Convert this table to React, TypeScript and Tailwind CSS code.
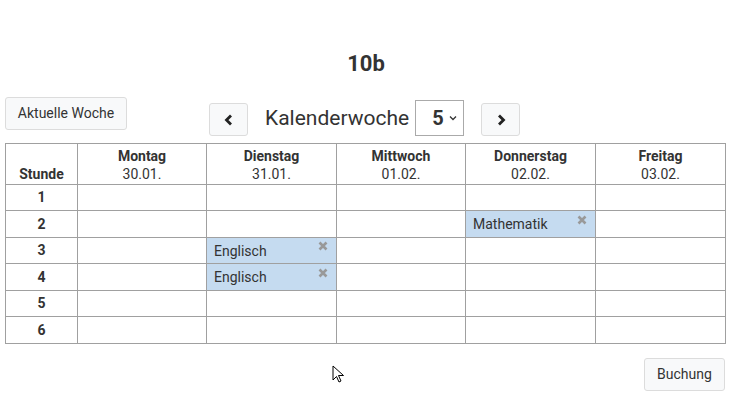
import React from "react";

const days = [
  { name: "Montag", date: "30.01." },
  { name: "Dienstag", date: "31.01." },
  { name: "Mittwoch", date: "01.02." },
  { name: "Donnerstag", date: "02.02." },
  { name: "Freitag", date: "03.02." },
];

// lessons keyed by "hour-dayIndex"
const lessons: Record<string, string> = {
  "2-3": "Mathematik",
  "3-1": "Englisch",
  "4-1": "Englisch",
};

const Chevron = ({ dir }: { dir: "left" | "right" }) => (
  <svg width="10" height="12" viewBox="0 0 10 12">
    <path
      d={dir === "left" ? "M7 1.5 L2.5 6 L7 10.5" : "M3 1.5 L7.5 6 L3 10.5"}
      fill="none"
      stroke="#222"
      strokeWidth="2.8"
    />
  </svg>
);

const Cross = () => (
  <svg width="10" height="10" viewBox="0 0 10 10">
    <path d="M1.5 1.5 L8.5 8.5 M8.5 1.5 L1.5 8.5" stroke="#999" strokeWidth="2.6" />
  </svg>
);

export default function App() {
  return (
    <div className="relative w-[731px] h-[401px] bg-white text-[#333] font-['Roboto',sans-serif]">
      <div className="px-[5px] pt-[49px]">
        <h1 className="text-center text-[22px] font-bold leading-[30px] ml-[1px]">10b</h1>

        <div className="flex items-start mt-[18px] h-[46px]">
          <button className="h-[33px] w-[122px] rounded-[3px] border border-[#dcdcdc] bg-[#f8f9fa] text-[14px] text-[#333]">
            Aktuelle Woche
          </button>
          <div className="flex items-center ml-[82px] mt-[3px]">
            <button className="flex h-[33px] w-[39px] items-center justify-center rounded-[3px] border border-[#dcdcdc] bg-[#f8f9fa] mt-[3px]">
              <Chevron dir="left" />
            </button>
            <span className="ml-[17px] text-[21px] leading-[30px] text-[#333]">Kalenderwoche</span>
            <div className="ml-[6px] flex h-[36px] w-[49px] items-center border border-[#aaa] bg-white pl-[16px]">
              <span className="text-[20px] font-bold">5</span>
              <svg className="ml-[5px]" width="8" height="6" viewBox="0 0 8 6">
                <path d="M1 1.5 L4 4.5 L7 1.5" fill="none" stroke="#333" strokeWidth="1.3" />
              </svg>
            </div>
            <button className="ml-[17px] flex h-[33px] w-[39px] items-center justify-center rounded-[3px] border border-[#dcdcdc] bg-[#f8f9fa] mt-[3px]">
              <Chevron dir="right" />
            </button>
          </div>
        </div>

        <table className="w-[721px] border-collapse table-fixed text-[14px]">
          <colgroup>
            <col className="w-[72px]" />
            <col className="w-[129px]" />
            <col className="w-[130px]" />
            <col className="w-[129px]" />
            <col className="w-[130px]" />
            <col className="w-[130px]" />
          </colgroup>
          <thead>
            <tr className="h-[41px]">
              <th className="border border-[#a0a0a0] align-bottom pb-[1px] font-bold leading-[18px]">Stunde</th>
              {days.map((d) => (
                <th key={d.name} className="border border-[#a0a0a0] align-top pt-[3px] leading-[18px]">
                  <div className="font-bold">{d.name}</div>
                  <div className="font-normal">{d.date}</div>
                </th>
              ))}
            </tr>
          </thead>
          <tbody>
            {[1, 2, 3, 4, 5, 6].map((h) => (
              <tr key={h} className={h % 2 ? "h-[26px]" : "h-[27px]"}>
                <td className="border border-[#a0a0a0] p-0 text-center font-bold leading-[25px]">{h}</td>
                {days.map((d, i) => {
                  const l = lessons[`${h}-${i}`];
                  return (
                    <td
                      key={d.name}
                      className={`border border-[#a0a0a0] p-0 ${l ? "bg-[#c5dbf0]" : ""}`}
                    >
                      {l && (
                        <div className="relative flex h-[25px] items-center pl-[7px] pt-[1px]">
                          <span>{l}</span>
                          <span className="absolute right-[8px] top-[3px]">
                            <Cross />
                          </span>
                        </div>
                      )}
                    </td>
                  );
                })}
              </tr>
            ))}
          </tbody>
        </table>

        <div className="flex justify-end mt-[14px] pr-[1px]">
          <button className="h-[33px] w-[81px] rounded-[3px] border border-[#dcdcdc] bg-[#f8f9fa] text-[14px] text-[#333]">
            Buchung
          </button>
        </div>
      </div>

      <svg className="absolute left-[332px] top-[365px]" width="14" height="20" viewBox="0 0 14 20">
        <path d="M1 1 L1 15 L4.5 11.5 L7 17 L9 16 L6.5 10.5 L11.5 10.5 Z" fill="#fff" stroke="#000" strokeWidth="1" />
      </svg>
    </div>
  );
}
